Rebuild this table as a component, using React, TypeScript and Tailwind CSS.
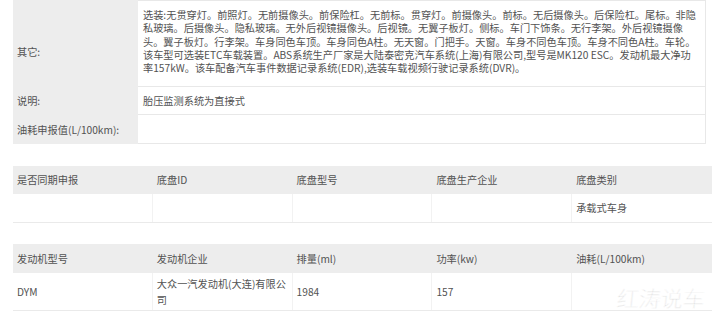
const otherLines = [
  "选装:无贯穿灯。前照灯。无前摄像头。前保险杠。无前标。贯穿灯。前摄像头。前标。无后摄像头。后保险杠。尾标。非隐",
  "私玻璃。后摄像头。隐私玻璃。无外后视镜摄像头。后视镜。无翼子板灯。侧标。车门下饰条。无行李架。外后视镜摄像",
  "头。翼子板灯。行李架。车身同色车顶。车身同色A柱。无天窗。门把手。天窗。车身不同色车顶。车身不同色A柱。车轮。",
  "该车型可选装ETC车载装置。ABS系统生产厂家是大陆泰密克汽车系统(上海)有限公司,型号是MK120 ESC。发动机最大净功",
  "率157kW。该车配备汽车事件数据记录系统(EDR),选装车载视频行驶记录系统(DVR)。",
];

const chassisHead = ["是否同期申报", "底盘ID", "底盘型号", "底盘生产企业", "底盘类别"];
const chassisRow = ["", "", "", "", "承载式车身"];
const engineHead = ["发动机型号", "发动机企业", "排量(ml)", "功率(kw)", "油耗(L/100km)"];

export default function App() {
  return (
    <div
      className="relative w-[719px] h-[326px] overflow-hidden bg-white text-[10.2px] text-[#525252]"
      style={{ fontFamily: '"Noto Sans CJK SC", "Noto Sans", sans-serif' }}
    >
      {/* vehicle info block */}
      <div className="ml-[13px] w-[693px] flex flex-col">
        <div className="flex h-[87px]">
          <div className="w-[125px] bg-[#ededed] pl-[4px] pt-[45px] leading-[13px]">其它:</div>
          <div className="flex-1 border-t border-r border-b border-[#e8e8e8] pl-[5px] pt-[7px] leading-[13.3px] whitespace-nowrap">
            <p>
              {otherLines.map((l, i) => (
                <span key={i}>
                  {l}
                  {i < otherLines.length - 1 && <br />}
                </span>
              ))}
            </p>
          </div>
        </div>
        <div className="flex h-[28px]">
          <div className="w-[125px] bg-[#ededed] pl-[4px] flex items-center">说明:</div>
          <div className="flex-1 border-r border-b border-[#e8e8e8] pl-[5px] flex items-center">
            胎压监测系统为直接式
          </div>
        </div>
        <div className="flex h-[29px]">
          <div className="w-[125px] bg-[#ededed] pl-[4px] flex items-center">油耗申报值(L/100km):</div>
          <div className="flex-1 border-r border-b border-[#e8e8e8]" />
        </div>
      </div>

      {/* chassis table */}
      <div className="ml-[13px] mt-[22px] w-[699px]">
        <div className="grid grid-cols-5 h-[28px] bg-[#ededed]">
          {chassisHead.map((h) => (
            <div key={h} className="pl-[4px] flex items-center">{h}</div>
          ))}
        </div>
        <div className="grid grid-cols-5 h-[29px] border-b border-[#eaeaea]">
          {chassisRow.map((c, i) => (
            <div key={i} className="pl-[4px] flex items-center border-r border-[#f2f2f2] last:border-r-0">{c}</div>
          ))}
        </div>
      </div>

      {/* engine table */}
      <div className="ml-[13px] mt-[21px] w-[699px]">
        <div className="grid grid-cols-5 h-[29px] bg-[#ededed]">
          {engineHead.map((h) => (
            <div key={h} className="pl-[4px] flex items-center">{h}</div>
          ))}
        </div>
        <div className="grid grid-cols-5 h-[38px] border-b border-[#eaeaea]">
          <div className="pl-[4px] flex items-center border-r border-[#f2f2f2]">DYM</div>
          <div className="pl-[4px] flex items-center border-r border-[#f2f2f2] leading-[16px] whitespace-nowrap">
            <span>
              大众一汽发动机(大连)有限公
              <br />司
            </span>
          </div>
          <div className="pl-[4px] flex items-center border-r border-[#f2f2f2]">1984</div>
          <div className="pl-[4px] flex items-center border-r border-[#f2f2f2]">157</div>
          <div className="pl-[4px] flex items-center" />
        </div>
      </div>

      {/* watermark */}
      <div
        className="absolute left-[617px] top-[283px] text-[22px] leading-[28px] font-light text-[#d8d8d8] -skew-x-6"
        style={{ WebkitTextStroke: "0.6px #ffffff" }}
      >
        红涛说车
      </div>
    </div>
  );
}
